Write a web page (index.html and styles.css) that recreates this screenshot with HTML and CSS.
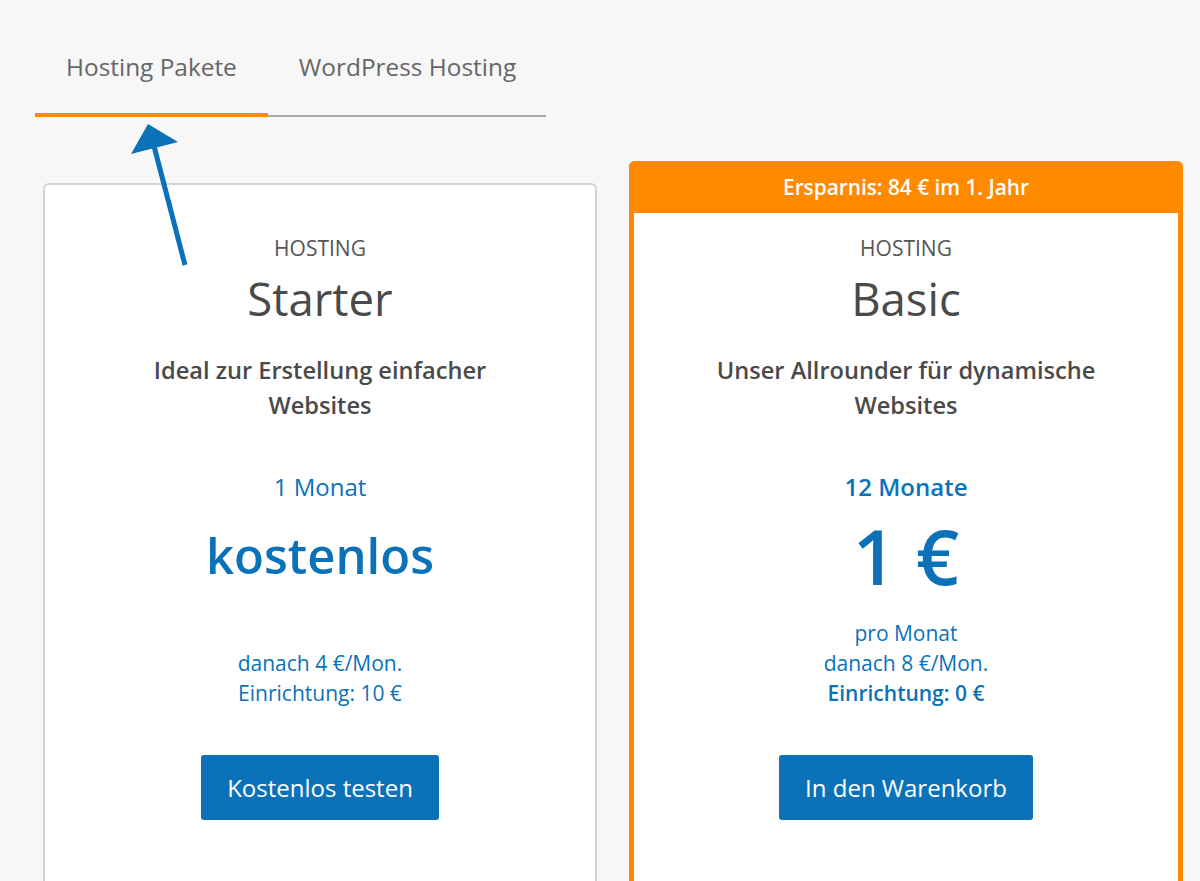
FILE: index.html
```html
<!DOCTYPE html>
<html lang="de">
<head>
    <meta charset="UTF-8" />
    <meta name="viewport" content="width=device-width, initial-scale=1.0"/>
    <title>Hosting Pakete</title>
    <link rel="stylesheet" href="styles.css">
</head>
<body>

    <nav class="tabs">
        <a class="tab active" href="#">Hosting Pakete</a>
        <a class="tab" href="#">WordPress Hosting</a>
    </nav>

    <div class="plans">
        <div class="card card-plain">
            <div class="card-body">
                <div class="kind">HOSTING</div>
                <h2 class="name">Starter</h2>
                <p class="desc">Ideal zur Erstellung einfacher<br>Websites</p>
                <div class="term">1 Monat</div>
                <div class="price price-word">kostenlos</div>
                <div class="notes">
                    <span>&nbsp;</span>
                    <span>danach 4 €/Mon.</span>
                    <span>Einrichtung: 10 €</span>
                </div>
                <a class="btn" href="#">Kostenlos testen</a>
            </div>
        </div>

        <div class="card card-featured">
            <div class="card-head">Ersparnis: 84 € im 1. Jahr</div>
            <div class="card-body">
                <div class="kind">HOSTING</div>
                <h2 class="name">Basic</h2>
                <p class="desc">Unser Allrounder für dynamische<br>Websites</p>
                <div class="term strong">12 Monate</div>
                <div class="price">1 €</div>
                <div class="notes">
                    <span>pro Monat</span>
                    <span>danach 8 €/Mon.</span>
                    <span class="strong">Einrichtung: 0 €</span>
                </div>
                <a class="btn" href="#">In den Warenkorb</a>
            </div>
        </div>
    </div>

    <!-- hint arrow pointing at the active tab -->
    <svg class="arrow" width="80" height="170" viewBox="120 110 80 170">
        <line x1="185" y1="265" x2="154" y2="146" stroke="#0b72ba" stroke-width="5" />
        <polygon points="148,124 131,154 178,142" fill="#0b72ba" />
    </svg>

</body>
</html>
```

FILE: styles.css
```css
* {
    box-sizing: border-box;
    font-family: 'Open Sans', sans-serif;
}

body {
    margin: 0;
    background: #f7f7f7;
    color: #4a4a4a;
    height: 881px;
    overflow: hidden;
    position: relative;
}

.tabs {
    display: flex;
    width: 511px;
    margin-left: 35px;
    border-bottom: 2px solid #a9a9a9;
}

.tab {
    display: block;
    flex: none;
    white-space: nowrap;
    padding: 50px 31px 30px;
    font-size: 24.4px;
    line-height: 33px;
    color: #666;
    text-decoration: none;
    border-bottom: 4px solid transparent;
    margin-bottom: -2px;
}

.tab.active {
    border-bottom-color: #ff8a00;
}

.plans {
    display: flex;
    align-items: flex-start;
    gap: 32px;
    margin: 44px 0 0 43px;
}

.card {
    flex: none;
    width: 554px;
    background: #fff;
    border-radius: 6px;
    min-height: 760px;
    text-align: center;
}

.card-plain {
    margin-top: 22px;
    border: 2px solid #d4d4d4;
}

.card-plain .card-body {
    padding-top: 50px;
}

.card-featured {
    border: 5px solid #ff8a00;
    border-top: 0;
}

.card-head {
    background: #ff8a00;
    color: #fff;
    font-size: 20.8px;
    font-weight: 600;
    height: 52px;
    line-height: 52px;
    margin: 0 -5px;
    border-radius: 6px 6px 0 0;
}

.card-body {
    padding: 22px 30px 0;
    display: flex;
    flex-direction: column;
    align-items: center;
}

.kind {
    font-size: 21px;
    line-height: 26px;
    color: #555;
}

.name {
    margin: 10px 0 0;
    font-size: 45.5px;
    line-height: 54px;
    font-weight: 400;
    color: #4a4a4a;
}

.desc {
    margin: 28px 0 0;
    font-size: 23.6px;
    line-height: 35px;
    font-weight: 600;
    color: #4a4a4a;
}

.term {
    margin-top: 47px;
    font-size: 24px;
    line-height: 33px;
    color: #0b72ba;
}

.strong {
    font-weight: 600;
}

.price {
    height: 115px;
    padding-bottom: 10px;
    display: flex;
    align-items: center;
    justify-content: center;
    font-size: 76px;
    line-height: 1;
    font-weight: 600;
    color: #0b72ba;
}

.price-word {
    font-size: 49px;
}

.notes {
    display: flex;
    flex-direction: column;
    font-size: 21px;
    line-height: 30px;
    color: #0b72ba;
}

.btn {
    display: block;
    margin-top: 47px;
    padding: 0 26px;
    height: 65px;
    line-height: 65px;
    font-size: 24px;
    color: #fff;
    background: #0b72ba;
    border-radius: 3px;
    text-decoration: none;
}

.arrow {
    position: absolute;
    left: 120px;
    top: 110px;
}
```
